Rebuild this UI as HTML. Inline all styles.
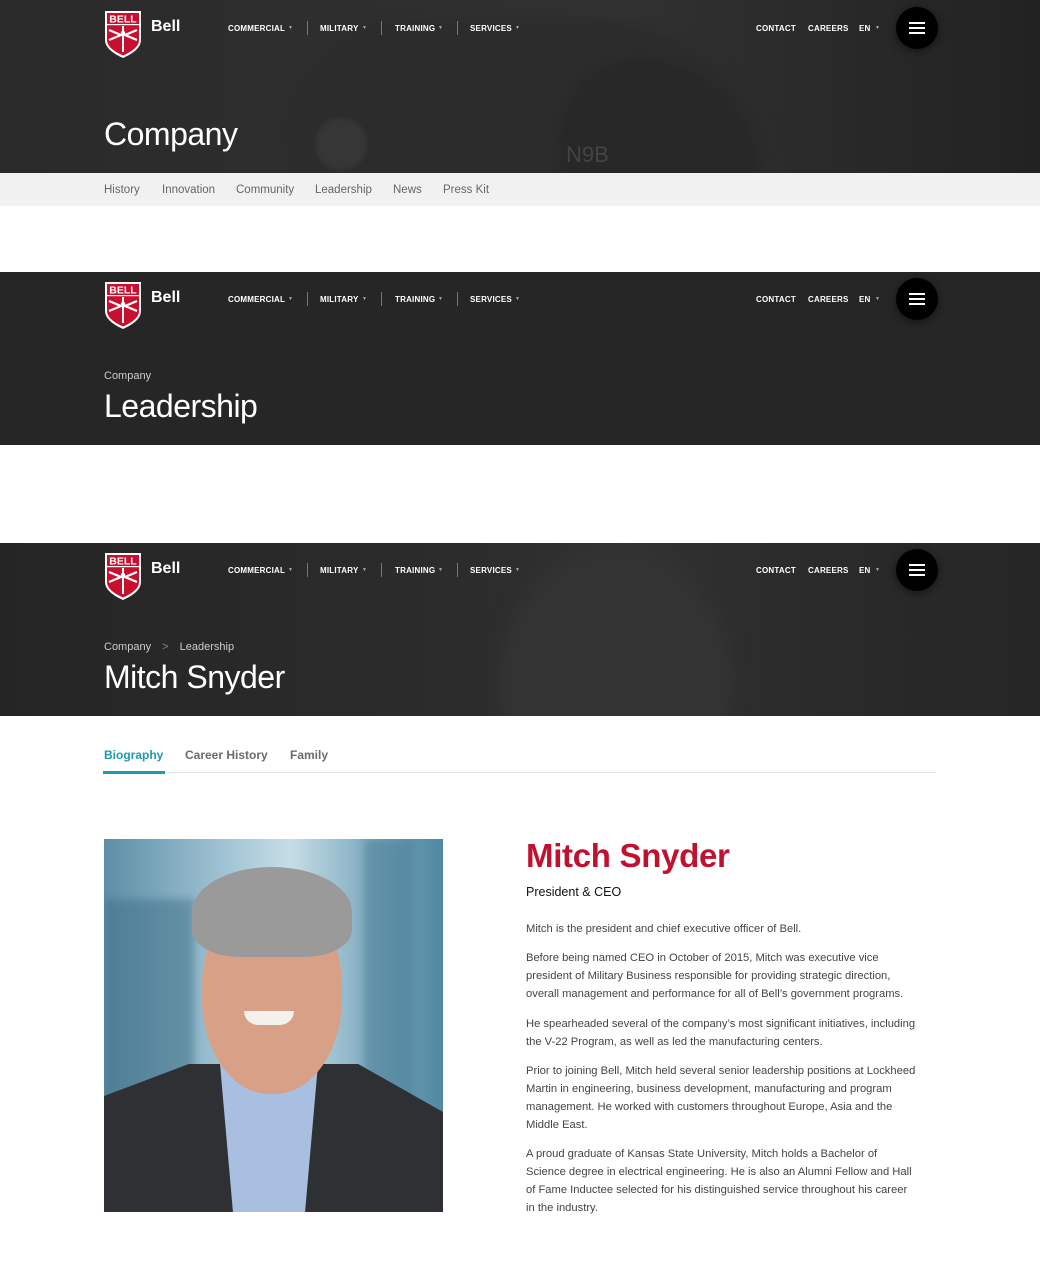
<!DOCTYPE html>
<html><head><meta charset="utf-8">
<style>
*{margin:0;padding:0;box-sizing:border-box}
body{width:1040px;height:1287px;background:#fff;font-family:"Liberation Sans",Arial,sans-serif;position:relative;overflow:hidden}
.hero{position:absolute;left:0;width:1040px;height:173px;background:#262626;overflow:hidden}
.logo{position:absolute;left:104px;top:10px}
.bell{position:absolute;left:151px;top:18px;color:#fff;font-weight:bold;font-size:16px}
.n{position:absolute;top:24px;color:#fff;font-weight:bold;font-size:8px;letter-spacing:.2px;white-space:nowrap}
.c{position:absolute;top:25px;font-size:5px;color:#aaa}
.sep{position:absolute;top:21px;width:1px;height:14px;background:#777}
.burger{position:absolute;left:896px;top:7px;width:42px;height:42px;border-radius:50%;background:#000;box-shadow:0 2px 8px rgba(0,0,0,.5)}
.burger i{position:absolute;left:13px;width:16px;height:2px;background:#fff}
.title{position:absolute;left:104px;color:#fff;font-size:32px;letter-spacing:-.5px}
.crumb{position:absolute;left:104px;color:#ccc;font-size:11px}
.sub{position:absolute;top:173px;left:0;width:1040px;height:33px;background:#f1f1f2;font-size:11.5px;color:#666}
.sub span{position:absolute;top:11px}
.tabs{position:absolute;top:748px;left:104px;font-size:12px;font-weight:bold;color:#6b6b6b}
.tabs span{position:absolute;white-space:nowrap}
p.b{position:absolute;left:526px;font-size:11.2px;line-height:18px;color:#444;white-space:nowrap}
</style></head><body>

<div class="hero" style="top:0;background:linear-gradient(90deg,#2a2a2a 0%,#2f2f2f 40%,#313131 60%,#222 100%)">
  <div style="position:absolute;left:290px;top:20px;width:500px;height:200px;border-radius:120px 200px 0 0;background:#2c2c2c;filter:blur(6px)"></div>
  <div style="position:absolute;left:560px;top:60px;width:200px;height:160px;border-radius:80px 120px 0 0;background:#272727;filter:blur(6px)"></div>
  <div style="position:absolute;left:315px;top:118px;width:52px;height:52px;border-radius:50%;background:#363636;filter:blur(2px)"></div>
  <div style="position:absolute;left:566px;top:142px;color:#444;font-size:22px">N9B</div>
  <div class="title" style="top:116px">Company</div>
</div>
<div class="sub">
  <span style="left:104px">History</span><span style="left:162px">Innovation</span><span style="left:236px">Community</span><span style="left:315px">Leadership</span><span style="left:393px">News</span><span style="left:443px">Press Kit</span>
</div>

<div class="hero" style="top:272px;background:#262626">
  <div class="crumb" style="top:98px">Company</div>
  <div class="title" style="top:116px">Leadership</div>
</div>

<div class="hero" style="top:543px;background:linear-gradient(90deg,#252525 0%,#2c2c2c 45%,#323232 60%,#2a2a2a 80%,#262626 100%)">
  <div style="position:absolute;left:500px;top:10px;width:230px;height:260px;border-radius:50%;background:#343434;filter:blur(10px)"></div>
  <div class="crumb" style="top:98px">Company <span style="color:#888;margin:0 8px">&gt;</span> Leadership</div>
  <div class="title" style="top:116px">Mitch Snyder</div>
</div>

<div id="hdrs"></div>
<script>
var h='';
[0,271,542].forEach(function(t){
h+='<div style="position:absolute;left:0;top:'+t+'px;width:1040px;height:60px">'+
'<svg class="logo" width="38" height="48" viewBox="0 0 38 48"><path d="M1 1H37V30Q37 40 19 48Q1 40 1 30Z" fill="#fff"/><path d="M3 3H35V30Q35 38.5 19 45.5Q3 38.5 3 30Z" fill="#c8102e"/><rect x="3" y="14" width="32" height="1.2" fill="#fff"/><text x="19" y="12.5" text-anchor="middle" font-family="Liberation Sans" font-weight="bold" font-size="10.5" fill="#fff">BELL</text><path d="M5 20L17 25L5 30M33 20L21 25L33 30" stroke="#fff" stroke-width="2.2" fill="none"/><rect x="18" y="16" width="2" height="26" fill="#fff"/><circle cx="19" cy="23" r="2.2" fill="#fff"/></svg>'+
'<div class="bell">Bell</div>'+
'<span class="n" style="left:228px">COMMERCIAL</span><span class="c" style="left:288px">▼</span><span class="sep" style="left:307px"></span>'+
'<span class="n" style="left:320px">MILITARY</span><span class="c" style="left:362px">▼</span><span class="sep" style="left:381px"></span>'+
'<span class="n" style="left:395px">TRAINING</span><span class="c" style="left:438px">▼</span><span class="sep" style="left:457px"></span>'+
'<span class="n" style="left:470px">SERVICES</span><span class="c" style="left:515px">▼</span>'+
'<span class="n" style="left:756px">CONTACT</span><span class="n" style="left:808px">CAREERS</span><span class="n" style="left:859px">EN</span><span class="c" style="left:875px">▼</span>'+
'<div class="burger"><i style="top:15px"></i><i style="top:20px"></i><i style="top:25px"></i></div></div>';
});
document.getElementById('hdrs').innerHTML=h;
</script>

<div class="tabs">
  <span style="left:0;color:#1a9bb3">Biography</span>
  <span style="left:81px">Career History</span>
  <span style="left:186px">Family</span>
</div>
<div style="position:absolute;left:104px;top:772px;width:832px;height:1px;background:#e4e4e4"></div>
<div style="position:absolute;left:103px;top:771px;width:62px;height:3px;background:#1a9bb3"></div>

<div style="position:absolute;left:104px;top:839px;width:339px;height:373px;overflow:hidden;background:linear-gradient(90deg,#5d8ea6 0%,#9fc3d3 35%,#c6dde6 55%,#7aa8bd 80%,#4f88a3 100%)">
  <div style="position:absolute;left:0;top:60px;width:90px;height:220px;background:#3f6e86;opacity:.5;filter:blur(4px)"></div>
  <div style="position:absolute;left:260px;top:0;width:50px;height:300px;background:#4a7d95;opacity:.5;filter:blur(4px)"></div>
  <div style="position:absolute;left:0;top:225px;width:339px;height:160px;background:#2e3034;clip-path:polygon(0 20%,25% 0,75% 0,100% 30%,100% 100%,0 100%)"></div>
  <div style="position:absolute;left:95px;top:225px;width:140px;height:160px;background:#a9bfe2;clip-path:polygon(15% 0,85% 0,75% 100%,25% 100%)"></div>
  <div style="position:absolute;left:98px;top:55px;width:140px;height:200px;border-radius:46% 46% 48% 48%;background:#d9a088"></div>
  <div style="position:absolute;left:88px;top:28px;width:160px;height:90px;border-radius:50% 50% 30% 30%;background:#9a9a9a"></div>
  <div style="position:absolute;left:140px;top:172px;width:50px;height:14px;border-radius:0 0 25px 25px;background:#f4f1ec"></div>
</div>

<div style="position:absolute;left:526px;top:837px;color:#c0112e;font-size:33px;font-weight:900;letter-spacing:-.3px">Mitch Snyder</div>
<div style="position:absolute;left:526px;top:885px;font-size:12.5px;color:#111">President &amp; CEO</div>
<p class="b" style="top:920px">Mitch is the president and chief executive officer of Bell.</p>
<p class="b" style="top:949px">Before being named CEO in October of 2015, Mitch was executive vice<br>president of Military Business responsible for providing strategic direction,<br>overall management and performance for all of Bell’s government programs.</p>
<p class="b" style="top:1015px">He spearheaded several of the company’s most significant initiatives, including<br>the V-22 Program, as well as led the manufacturing centers.</p>
<p class="b" style="top:1062px">Prior to joining Bell, Mitch held several senior leadership positions at Lockheed<br>Martin in engineering, business development, manufacturing and program<br>management. He worked with customers throughout Europe, Asia and the<br>Middle East.</p>
<p class="b" style="top:1145px">A proud graduate of Kansas State University, Mitch holds a Bachelor of<br>Science degree in electrical engineering. He is also an Alumni Fellow and Hall<br>of Fame Inductee selected for his distinguished service throughout his career<br>in the industry.</p>
</body></html>
